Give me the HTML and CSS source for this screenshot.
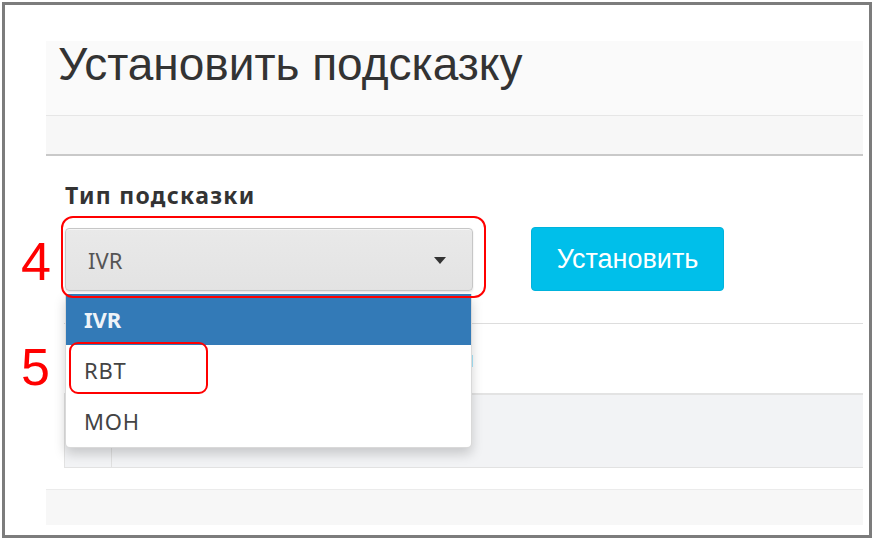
FILE: index.html
```html
<!DOCTYPE html>
<html lang="ru">
<head>
<meta charset="utf-8">
<title>Установить подсказку</title>
<link rel="stylesheet" href="styles.css">
</head>
<body>
<div class="frame">
  <div class="page">
    <div class="page-header">
      <h1 class="title">Установить подсказку</h1>
    </div>
    <div class="subbar"></div>
    <div class="content">
      <div class="label">Тип подсказки</div>
      <div class="controls">
        <div class="select-wrap">
          <div class="select"><span class="select-value">IVR</span><span class="caret"></span></div>
          <div class="dropdown">
            <div class="item active">IVR</div>
            <div class="item">RBT</div>
            <div class="item">MOH</div>
            <div class="mark mark-5"></div>
          </div>
          <div class="mark mark-4"></div>
        </div>
        <button class="btn">Установить</button>
      </div>
      <div class="tabs"><a class="tab-link">Все подсказки</a></div>
      <div class="table-head"><div class="cell-num"></div><div class="cell-rest"></div></div>
    </div>
    <div class="footer"></div>
  </div>
  <span class="num num-4">4</span>
  <span class="num num-5">5</span>
</div>
</body>
</html>
```

FILE: styles.css
```css
html, body {
  margin: 0;
  padding: 0;
  background: #ffffff;
}

.frame {
  position: relative;
  box-sizing: border-box;
  margin: 2px 0 0 2px;
  width: 870px;
  height: 536px;
  border: 3px solid #7c7c7c;
  background: #ffffff;
  overflow: hidden;
}

.page {
  padding: 36px 6px 0 41px;
}

.page-header {
  box-sizing: border-box;
  height: 75px;
  background: #fafafa;
  border-bottom: 1px solid #e6e6e6;
  padding-left: 12px;
}

.title {
  margin: 0;
  font-family: "Liberation Sans", Arial, sans-serif;
  font-weight: normal;
  font-size: 46px;
  line-height: 46px;
  color: #333333;
}

.subbar {
  height: 38px;
  background: #f7f7f7;
  border-bottom: 2px solid #c9c9c9;
}

.content {
  padding: 24px 0 21px 18px;
  font-family: "Noto Sans", "Open Sans", sans-serif;
}

.label {
  padding-left: 1px;
  font-weight: bold;
  font-size: 23px;
  line-height: 30px;
  letter-spacing: 1.3px;
  color: #333333;
}

.controls {
  display: flex;
  align-items: flex-end;
  margin-top: 17px;
  height: 64px;
}

.select-wrap {
  position: relative;
  margin-left: 1px;
  width: 408px;
  z-index: 2;
}

.select {
  box-sizing: border-box;
  display: flex;
  align-items: center;
  height: 63px;
  padding: 0 26px 0 22px;
  background: linear-gradient(#e9e9e9, #e3e3e3);
  border: 1px solid #c6c6c6;
  border-radius: 4px;
  box-shadow: inset 0 1px 0 rgba(255,255,255,0.6), 0 1px 2px rgba(0,0,0,0.12);
  font-size: 22px;
  color: #555555;
}

.select-value {
  flex: 1;
}

.caret {
  width: 0;
  height: 0;
  border-left: 6px solid transparent;
  border-right: 6px solid transparent;
  border-top: 7px solid #333333;
  margin-top: 2px;
}

.dropdown {
  position: absolute;
  top: calc(100% + 3px);
  left: 0;
  width: 407px;
  box-sizing: border-box;
  background: #ffffff;
  border: 1px solid rgba(0,0,0,0.15);
  border-top: none;
  border-radius: 0 0 5px 5px;
  box-shadow: 0 6px 12px rgba(0,0,0,0.175);
}

.item {
  height: 51px;
  line-height: 51px;
  padding-left: 18px;
  font-size: 22px;
  letter-spacing: 0.8px;
  color: #444444;
}

.item.active {
  background: #337ab7;
  color: #eef3f8;
  font-weight: bold;
  letter-spacing: 0;
}

.mark {
  position: absolute;
  box-sizing: border-box;
  border: 2.5px solid #ff0000;
  pointer-events: none;
}

.mark-4 {
  left: -4px;
  top: -12px;
  width: 425px;
  height: 82px;
  border-radius: 12px;
}

.mark-5 {
  left: 3px;
  top: 48px;
  width: 139px;
  height: 52px;
  border-radius: 9px;
}

.btn {
  box-sizing: border-box;
  margin-left: 58px;
  width: 193px;
  height: 64px;
  padding: 0;
  background: #00bfea;
  border: 1px solid #00b3dc;
  border-radius: 4px;
  color: #ffffff;
  font-family: "Liberation Sans", Arial, sans-serif;
  font-size: 27px;
}

.tabs {
  margin-top: 32px;
  height: 69px;
  border-top: 1px solid #dddddd;
  padding-right: 389px;
  text-align: right;
  line-height: 69px;
  font-size: 22px;
}

.tab-link {
  color: #2a6cb0;
}

.table-head {
  display: flex;
  height: 72px;
  background: #f2f3f5;
  border-top: 2px solid #e3e3e3;
  border-bottom: 1px solid #e2e2e2;
  border-left: 1px solid #e2e2e2;
}

.cell-num {
  width: 46px;
  border-right: 1px solid #e0e0e0;
}

.cell-rest {
  flex: 1;
}

.footer {
  height: 35px;
  background: #f7f7f7;
  border-top: 1px solid #ebebeb;
}

.num {
  position: absolute;
  font-family: "Liberation Sans", Arial, sans-serif;
  font-size: 54px;
  line-height: 54px;
  color: #ff0000;
}

.num-4 {
  left: 16px;
  top: 229px;
}

.num-5 {
  left: 16px;
  top: 335px;
  font-size: 52px;
}
```
